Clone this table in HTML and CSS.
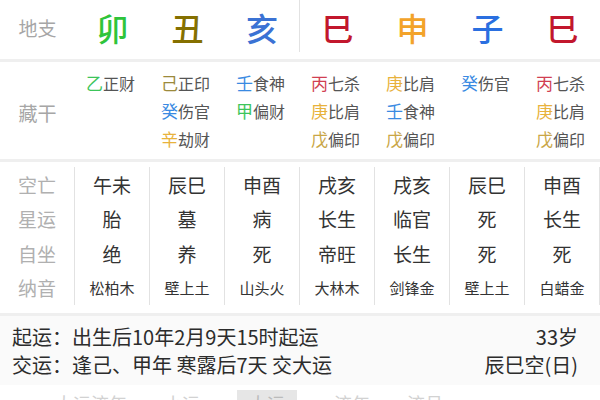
FILE: index.html
```html
<!DOCTYPE html>
<html lang="zh">
<head>
<meta charset="utf-8">
<link rel="stylesheet" href="styles.css">
</head>
<body>
<div class="page">
  <div class="grid top">
    <div class="label">地支</div>
    <div class="zhi c-green">卯</div>
    <div class="zhi c-olive">丑</div>
    <div class="zhi c-blue sep">亥</div>
    <div class="zhi c-red">巳</div>
    <div class="zhi c-orange">申</div>
    <div class="zhi c-blue2">子</div>
    <div class="zhi c-red">巳</div>
  </div>

  <div class="grid canggan">
    <div class="label cg-label">藏干</div>
    <div class="cg">
      <div><span class="g-green">乙</span>正财</div>
    </div>
    <div class="cg">
      <div><span class="g-olive">己</span>正印</div>
      <div><span class="g-blue">癸</span>伤官</div>
      <div><span class="g-gold">辛</span>劫财</div>
    </div>
    <div class="cg">
      <div><span class="g-blue">壬</span>食神</div>
      <div><span class="g-green">甲</span>偏财</div>
    </div>
    <div class="cg">
      <div><span class="g-red">丙</span>七杀</div>
      <div><span class="g-gold">庚</span>比肩</div>
      <div><span class="g-wu">戊</span>偏印</div>
    </div>
    <div class="cg">
      <div><span class="g-gold">庚</span>比肩</div>
      <div><span class="g-blue">壬</span>食神</div>
      <div><span class="g-wu">戊</span>偏印</div>
    </div>
    <div class="cg">
      <div><span class="g-blue">癸</span>伤官</div>
    </div>
    <div class="cg">
      <div><span class="g-red">丙</span>七杀</div>
      <div><span class="g-gold">庚</span>比肩</div>
      <div><span class="g-wu">戊</span>偏印</div>
    </div>
  </div>

  <div class="grid mid">
    <div class="col labels">
      <div class="cell">空亡</div>
      <div class="cell">星运</div>
      <div class="cell">自坐</div>
      <div class="cell">纳音</div>
    </div>
    <div class="col">
      <div class="cell">午未</div><div class="cell">胎</div><div class="cell">绝</div><div class="cell small">松柏木</div>
    </div>
    <div class="col">
      <div class="cell">辰巳</div><div class="cell">墓</div><div class="cell">养</div><div class="cell small">壁上土</div>
    </div>
    <div class="col">
      <div class="cell">申酉</div><div class="cell">病</div><div class="cell">死</div><div class="cell small">山头火</div>
    </div>
    <div class="col">
      <div class="cell">戌亥</div><div class="cell">长生</div><div class="cell">帝旺</div><div class="cell small">大林木</div>
    </div>
    <div class="col">
      <div class="cell">戌亥</div><div class="cell">临官</div><div class="cell">长生</div><div class="cell small">剑锋金</div>
    </div>
    <div class="col">
      <div class="cell">辰巳</div><div class="cell">死</div><div class="cell">死</div><div class="cell small">壁上土</div>
    </div>
    <div class="col">
      <div class="cell">申酉</div><div class="cell">长生</div><div class="cell">死</div><div class="cell small">白蜡金</div>
    </div>
  </div>

  <div class="info">
    <div class="line"><span>起运：出生后10年2月9天15时起运</span><span>33岁</span></div>
    <div class="line"><span>交运：逢己、甲年 寒露后7天 交大运</span><span>辰巳空(日)</span></div>
  </div>

  <div class="tabs">
    <span class="tab">大运流年</span>
    <span class="tab">小运</span>
    <span class="tab active">大运</span>
    <span class="tab">流年</span>
    <span class="tab">流月</span>
  </div>
</div>
</body>
</html>
```

FILE: styles.css
```css
* { box-sizing: border-box; }
html, body { margin: 0; padding: 0; background: #fff; }
body {
  font-family: "Noto Sans CJK SC", "Noto Sans", sans-serif;
  color: #333;
  width: 600px;
  height: 400px;
  overflow: hidden;
}
.grid {
  display: grid;
  grid-template-columns: 75px repeat(7, 75px);
}
.label {
  color: #a6a6a6;
  font-size: 19px;
  text-align: center;
  align-self: center;
}
/* top row */
.top {
  height: 59px;
  border-bottom: 3px solid #efefef;
  box-sizing: content-box;
}
.top .label { margin-top: -4px; }
.zhi {
  height: 52px;
  padding-top: 1px;
  display: flex;
  align-items: center;
  justify-content: center;
  font-size: 32px;
  font-weight: 500;
  line-height: 1;
}
.zhi.sep { border-right: 1px solid #e2e2e2; }
.c-green { color: #2fc43a; }
.c-olive { color: #857000; }
.c-blue { color: #3b72d4; }
.c-red { color: #c2172d; }
.c-orange { color: #f3a32a; }
.c-blue2 { color: #2a6fe0; }

/* canggan */
.canggan {
  padding: 7px 0 6px;
  border-bottom: 3px solid #efefef;
  min-height: 96px;
}
.cg-label { margin-top: 2px; }
.cg {
  padding-left: 11px;
  font-size: 16px;
  line-height: 27px;
  color: #555;
}
.cg span { font-size: 17px; }
.g-green { color: #3cc55a; }
.g-olive { color: #9c8a3c; }
.g-blue { color: #3a8ae2; }
.g-gold { color: #e8b23c; }
.g-red { color: #d13f52; }
.g-wu { color: #c9a646; }

/* middle */
.mid {
  padding: 5px 0 8px;
  border-bottom: 3px solid #efefef;
}
.col {
  border-right: 1px solid #e2e2e2;
  display: flex;
  flex-direction: column;
}
.cell {
  height: 34.5px;
  display: flex;
  align-items: center;
  justify-content: center;
  font-size: 19px;
  color: #333;
}
.cell.small { font-size: 15px; }
.labels .cell { color: #b0b0b0; }

/* info */
.info {
  background: #fafafa;
  padding: 7px 22px 6px 12px;
  font-size: 20px;
  color: #2c2c2c;
}
.line {
  display: flex;
  justify-content: space-between;
  line-height: 28px;
}

/* tabs */
.tabs {
  display: flex;
  padding: 5px 0 0 55px;
  gap: 37px;
  font-size: 18px;
  color: #d2d2d2;
  line-height: 26px;
}
.tab.active {
  background: #e6e6e6;
  color: #bbb;
  padding: 0 12px;
}
```
